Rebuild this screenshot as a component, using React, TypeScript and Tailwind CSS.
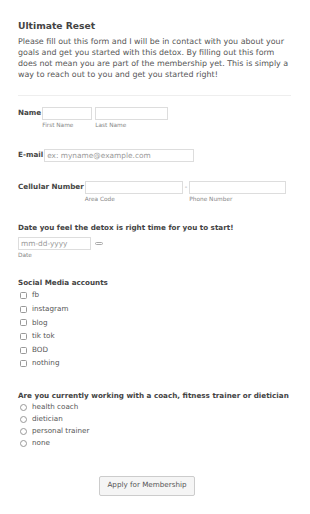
import React from "react";

const font = { fontFamily: '"DejaVu Sans", Verdana, sans-serif' };

function Check({ label }: { label: string }) {
  return (
    <div className="flex items-center h-[13.6px]">
      <span className="ml-[2px] w-[7px] h-[7px] border border-[#999] rounded-[1.5px] bg-white" />
      <span className="ml-[5px] text-[7.2px] text-[#555]">{label}</span>
    </div>
  );
}

function Radio({ label }: { label: string }) {
  return (
    <div className="flex items-center h-[12px]">
      <span className="ml-[2px] w-[7px] h-[7px] border border-[#999] rounded-full bg-white" />
      <span className="ml-[5px] text-[7.2px] text-[#555]">{label}</span>
    </div>
  );
}

export default function App() {
  return (
    <div className="w-[310px] h-[514px] bg-white text-[#555] overflow-hidden" style={font}>
      <div className="pl-[18px] pr-[19px] pt-[20px]">
        <h1 className="text-[9.2px] font-bold text-[#444] leading-[12px]">Ultimate Reset</h1>
        <p className="text-[7.95px] leading-[11px] text-[#555] mt-[4px]">
          Please fill out this form and I will be in contact with you about your goals and get you started with this detox. By filling out this form does not mean you are part of the membership yet. This is simply a way to reach out to you and get you started right!
        </p>
        <div className="mt-[15px] border-t border-[#eee]" />

        {/* Name */}
        <div className="flex mt-[11px]">
          <span className="text-[7.2px] font-bold text-[#444] leading-[10px] mt-[1px]">Name</span>
          <div className="flex flex-col ml-[1px]">
            <div className="w-[50px] h-[13px] border border-[#ddd] bg-white" />
            <span className="text-[5.8px] text-[#888] mt-[2px] leading-[7px]">First Name</span>
          </div>
          <div className="flex flex-col ml-[3px]">
            <div className="w-[73px] h-[13px] border border-[#ddd] bg-white" />
            <span className="text-[5.8px] text-[#888] mt-[2px] leading-[7px]">Last Name</span>
          </div>
        </div>

        {/* Email */}
        <div className="flex mt-[20px]">
          <span className="text-[7.2px] font-bold text-[#444] leading-[10px] mt-[1px]">E-mail</span>
          <div className="ml-[1px] w-[150px] h-[13px] border border-[#ddd] bg-white flex items-center pl-[2px]">
            <span className="text-[7.4px] text-[#999]">ex: myname@example.com</span>
          </div>
        </div>

        {/* Cellular */}
        <div className="flex mt-[19px]">
          <span className="text-[7.2px] font-bold text-[#444] leading-[10px] mt-[1px]">Cellular Number</span>
          <div className="flex flex-col ml-[1px]">
            <div className="w-[98px] h-[13px] border border-[#ddd] bg-white" />
            <span className="text-[5.8px] text-[#888] mt-[2px] leading-[7px]">Area Code</span>
          </div>
          <span className="text-[7px] text-[#999] mx-[2px] leading-[13px]">-</span>
          <div className="flex flex-col">
            <div className="w-[97px] h-[13px] border border-[#ddd] bg-white" />
            <span className="text-[5.8px] text-[#888] mt-[2px] leading-[7px]">Phone Number</span>
          </div>
        </div>

        {/* Date */}
        <h2 className="text-[7.2px] font-bold text-[#444] leading-[10px] mt-[20px]">
          Date you feel the detox is right time for you to start!
        </h2>
        <div className="flex items-center mt-[4px]">
          <div className="w-[73px] h-[13px] border border-[#ddd] bg-white flex items-center pl-[2px]">
            <span className="text-[7.4px] text-[#999]">mm-dd-yyyy</span>
          </div>
          <span className="ml-[4px] w-[8px] h-[3px] border border-[#aaa] rounded-full" />
        </div>
        <div className="text-[5.8px] text-[#888] mt-[2px] leading-[7px]">Date</div>

        {/* Social */}
        <h2 className="text-[7.2px] font-bold text-[#444] leading-[10px] mt-[19px]">Social Media accounts</h2>
        <div className="flex flex-col mt-[1px]">
          {["fb", "instagram", "blog", "tik tok", "BOD", "nothing"].map((l) => (
            <Check key={l} label={l} />
          ))}
        </div>

        {/* Coach */}
        <h2 className="text-[7.2px] font-bold text-[#444] leading-[10px] mt-[20px]">
          Are you currently working with a coach, fitness trainer or dietician
        </h2>
        <div className="flex flex-col mt-[1px]">
          {["health coach", "dietician", "personal trainer", "none"].map((l) => (
            <Radio key={l} label={l} />
          ))}
        </div>

        <div className="flex mt-[26px] pl-[81px]">
          <button className="w-[96px] h-[20px] border border-[#ccc] rounded-[2px] bg-[#f5f5f5] text-[7.2px] text-[#555]" style={font}>
            Apply for Membership
          </button>
        </div>
      </div>
    </div>
  );
}
